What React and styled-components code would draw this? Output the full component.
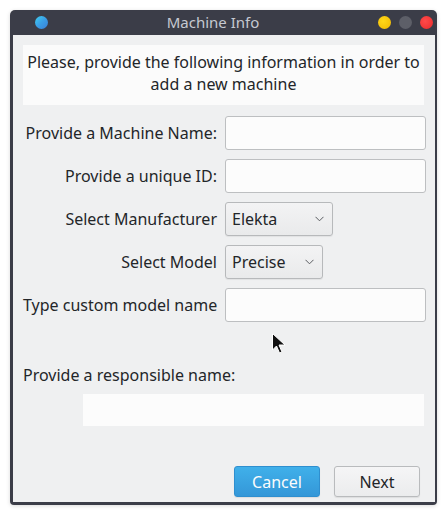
import React from "react";
import styled, { createGlobalStyle } from "styled-components";

const Global = createGlobalStyle`
  html, body { margin: 0; padding: 0; background: #ffffff; }
  body { font-family: "Noto Sans", "Open Sans", sans-serif; }
  * { box-sizing: border-box; }
`;

const Page = styled.div`
  width: 448px;
  height: 516px;
  padding: 10px 11px 11px 10px;
  position: relative;
`;

const Window = styled.div`
  width: 427px;
  height: 495px;
  background: #3b3d48;
  border-radius: 5px 5px 4px 4px;
  padding: 0 2px 3px 3px;
  display: flex;
  flex-direction: column;
  box-shadow: 0 1px 4px rgba(0,0,0,0.15);
`;

const TitleBar = styled.div`
  height: 25px;
  display: flex;
  align-items: center;
  padding: 0 2px 0 22px;
  flex-shrink: 0;
`;

const AppIcon = styled.div`
  width: 13px;
  height: 13px;
  border-radius: 50%;
  background: linear-gradient(135deg, #3fd0f0 0%, #3a9ee6 50%, #3a7fd8 100%);
`;

const Title = styled.div`
  flex: 1;
  text-align: center;
  color: #c6c9d1;
  font-size: 15px;
  line-height: 25px;
`;

const Controls = styled.div`
  display: flex;
  gap: 8px;
  align-items: center;
`;

const Dot = styled.div`
  width: 13px;
  height: 13px;
  border-radius: 50%;
  background: ${(p) => p.$color};
`;

const Content = styled.div`
  flex: 1;
  background: #eff0f1;
  padding: 10px 9px 5px 10px;
  display: flex;
  flex-direction: column;
  position: relative;
`;

const Header = styled.div`
  background: #fbfbfb;
  height: 60px;
  width: 401px;
  display: flex;
  align-items: center;
  justify-content: center;
  text-align: center;
  color: #232629;
  font-size: 16px;
  line-height: 22px;
  padding-bottom: 5px;
`;

const Form = styled.div`
  margin-top: 11px;
  display: grid;
  grid-template-columns: 194px 201px;
  column-gap: 8px;
  row-gap: 9px;
  align-items: center;
`;

const Label = styled.div`
  text-align: right;
  color: #232629;
  font-size: 16px;
  white-space: nowrap;
`;

const TextInput = styled.div`
  height: 34px;
  width: ${(p) => p.$w || "201px"};
  background: #fcfcfc;
  border: 1px solid #bdbfc1;
  border-radius: 3px;
`;

const Select = styled.div`
  height: 34px;
  width: ${(p) => p.$w};
  background: linear-gradient(#f3f3f4, #e9eaeb);
  border: 1px solid #b7b9bb;
  border-radius: 3px;
  display: flex;
  align-items: center;
  justify-content: space-between;
  padding: 0 8px 0 6px;
  color: #232629;
  font-size: 16px;
  box-shadow: 0 1px 1px rgba(0,0,0,0.06);
`;

const Chevron = () => (
  <svg width="9" height="6" viewBox="0 0 9 6">
    <path d="M0.5 0.8 L4.5 4.8 L8.5 0.8" fill="none" stroke="#5a5d61" strokeWidth="1" />
  </svg>
);

const Responsible = styled.div`
  margin-top: 43px;
  color: #232629;
  font-size: 16px;
  line-height: 20px;
`;

const FlatInput = styled.div`
  margin: 9px 0 0 60px;
  width: 341px;
  height: 32px;
  background: #fcfcfc;
`;

const Buttons = styled.div`
  margin-top: auto;
  display: flex;
  justify-content: flex-end;
  gap: 14px;
  padding-right: 6px;
`;

const Button = styled.div`
  width: 86px;
  height: 31px;
  border-radius: 3px;
  display: flex;
  align-items: center;
  justify-content: center;
  font-size: 16px;
  color: ${(p) => (p.$primary ? "#fcfcfc" : "#232629")};
  background: ${(p) =>
    p.$primary ? "linear-gradient(#40b0ea, #3497d8)" : "linear-gradient(#f5f5f6, #ebeced)"};
  border: 1px solid ${(p) => (p.$primary ? "#2f8fcf" : "#b9bbbd")};
  box-shadow: 0 1px 1px rgba(0,0,0,0.08);
`;

const Cursor = styled.svg`
  position: absolute;
  left: 259px;
  top: 298px;
`;

export default function App() {
  return (
    <>
      <Global />
      <Page>
        <Window>
          <TitleBar>
            <AppIcon />
            <Title>Machine Info</Title>
            <Controls>
              <Dot $color="radial-gradient(circle at 40% 40%, #ffd81a, #f0b800)" />
              <Dot $color="#5d5f68" />
              <Dot $color="radial-gradient(circle at 40% 40%, #ff4a4a, #ea2b2b)" />
            </Controls>
          </TitleBar>
          <Content>
            <Header>
              Please, provide the following information in order to
              <br />
              add a new machine
            </Header>
            <Form>
              <Label>Provide a Machine Name:</Label>
              <TextInput />
              <Label>Provide a unique ID:</Label>
              <TextInput />
              <Label>Select Manufacturer</Label>
              <Select $w="108px">
                <span>Elekta</span>
                <Chevron />
              </Select>
              <Label>Select Model</Label>
              <Select $w="98px">
                <span>Precise</span>
                <Chevron />
              </Select>
              <Label>Type custom model name</Label>
              <TextInput />
            </Form>
            <Responsible>Provide a responsible name:</Responsible>
            <FlatInput />
            <Buttons>
              <Button $primary>Cancel</Button>
              <Button>Next</Button>
            </Buttons>
            <Cursor width="16" height="22" viewBox="0 0 16 22">
              <path d="M0.5 0.5 L0.5 17 L4.5 13 L7.5 20 L10 19 L7 12 L13 12 Z" fill="#111" stroke="#fff" strokeWidth="1" />
            </Cursor>
          </Content>
        </Window>
      </Page>
    </>
  );
}
